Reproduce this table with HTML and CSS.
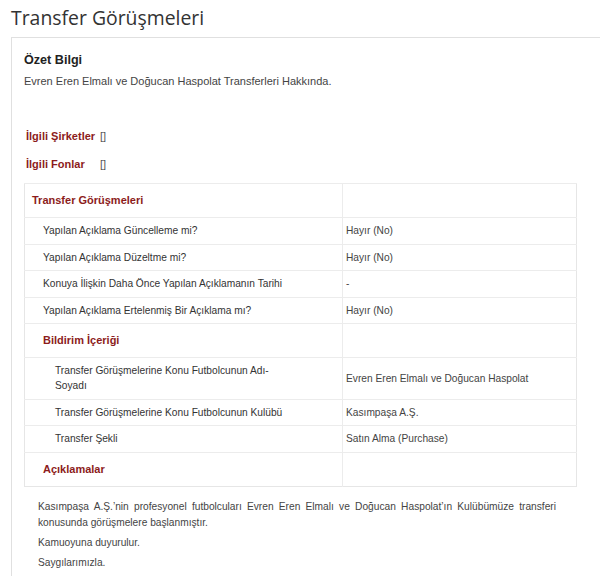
FILE: index.html
```html
<!DOCTYPE html>
<html lang="tr">
<head>
<meta charset="utf-8">
<title>Transfer Görüşmeleri</title>
<link rel="stylesheet" href="styles.css">
</head>
<body>
<h1 class="page-title">Transfer Görüşmeleri</h1>
<div class="panel">
  <h2 class="summary-title">Özet Bilgi</h2>
  <p class="summary-text">Evren Eren Elmalı ve Doğucan Haspolat Transferleri Hakkında.</p>
  <div class="related">
    <div class="related-row"><span class="related-label">İlgili Şirketler</span><span class="related-value">[]</span></div>
    <div class="related-row"><span class="related-label">İlgili Fonlar</span><span class="related-value">[]</span></div>
  </div>
  <table class="info-table">
    <tr class="head-row"><td class="lvl0">Transfer Görüşmeleri</td><td class="val"></td></tr>
    <tr><td class="lvl1">Yapılan Açıklama Güncelleme mi?</td><td class="val">Hayır (No)</td></tr>
    <tr><td class="lvl1">Yapılan Açıklama Düzeltme mi?</td><td class="val">Hayır (No)</td></tr>
    <tr><td class="lvl1">Konuya İlişkin Daha Önce Yapılan Açıklamanın Tarihi</td><td class="val">-</td></tr>
    <tr><td class="lvl1">Yapılan Açıklama Ertelenmiş Bir Açıklama mı?</td><td class="val">Hayır (No)</td></tr>
    <tr class="head-row"><td class="lvl1">Bildirim İçeriği</td><td class="val"></td></tr>
    <tr><td class="lvl2">Transfer Görüşmelerine Konu Futbolcunun Adı-Soyadı</td><td class="val">Evren Eren Elmalı ve Doğucan Haspolat</td></tr>
    <tr><td class="lvl2">Transfer Görüşmelerine Konu Futbolcunun Kulübü</td><td class="val">Kasımpaşa A.Ş.</td></tr>
    <tr><td class="lvl2">Transfer Şekli</td><td class="val">Satın Alma (Purchase)</td></tr>
    <tr class="head-row"><td class="lvl1">Açıklamalar</td><td class="val"></td></tr>
  </table>
  <div class="notes">
    <p class="note-para justify">Kasımpaşa A.Ş.’nin profesyonel futbolcuları Evren Eren Elmalı ve Doğucan Haspolat’ın Kulübümüze transferi konusunda görüşmelere başlanmıştır.</p>
    <p class="note-para">Kamuoyuna duyurulur.</p>
    <p class="note-para">Saygılarımızla.</p>
  </div>
</div>
</body>
</html>
```
FILE: styles.css
```css
html, body {
  margin: 0;
  padding: 0;
  background: #ffffff;
}
body {
  font-family: "Liberation Sans", Arial, sans-serif;
  color: #333333;
  width: 600px;
  height: 576px;
  overflow: hidden;
}
.page-title {
  margin: 0;
  padding: 4px 11px 0 11px;
  height: 33px;
  font-family: "Open Sans", sans-serif;
  font-size: 19.4px;
  font-weight: 400;
  line-height: 28px;
  color: #333333;
}
.panel {
  margin-left: 11px;
  border: 1px solid #e0e0e0;
  border-right: none;
  border-bottom: none;
  padding: 14px 0 40px 12px;
}
.summary-title {
  margin: 0;
  font-size: 12.6px;
  font-weight: 700;
  line-height: 16px;
  color: #222222;
}
.summary-text {
  margin: 5px 0 0 0;
  font-size: 11px;
  line-height: 16px;
  color: #444444;
}
.related {
  margin-top: 40px;
  display: flex;
  flex-direction: column;
  gap: 13px;
  padding-left: 2px;
}
.related-row {
  display: flex;
  align-items: center;
  line-height: 15px;
}
.related-label {
  width: 72px;
  font-size: 11px;
  font-weight: 700;
  color: #8c1c1c;
}
.related-value {
  margin-left: 2px;
  font-size: 11px;
  color: #555555;
}
.info-table {
  margin-top: 11px;
  width: 553px;
  border-collapse: collapse;
  border: 1px solid #e6e6e6;
  font-size: 10.2px;
  color: #333333;
}
.info-table td {
  border-top: 1px solid #ececec;
  padding: 5.25px 3px;
  line-height: 15px;
  vertical-align: middle;
}
.info-table td.val {
  width: 227px;
  border-left: 1px solid #ececec;
  color: #444444;
}
.info-table .head-row td {
  padding-top: 9px;
  padding-bottom: 9px;
}
.info-table .lvl0 {
  padding-left: 7px;
  padding-right: 47px;
  font-size: 11px;
  font-weight: 700;
  color: #8c1c1c;
}
.info-table .lvl1 {
  padding-left: 18px;
  padding-right: 47px;
}
.info-table .head-row .lvl1 {
  font-size: 11px;
  font-weight: 700;
  color: #8c1c1c;
}
.info-table .lvl2 {
  padding-left: 30px;
  padding-right: 47px;
}
.notes {
  padding: 12px 44px 0 14px;
  font-size: 10.2px;
  color: #444444;
}
.note-para {
  margin: 0 0 4px 0;
  line-height: 16px;
}
.justify {
  text-align: justify;
}
```
